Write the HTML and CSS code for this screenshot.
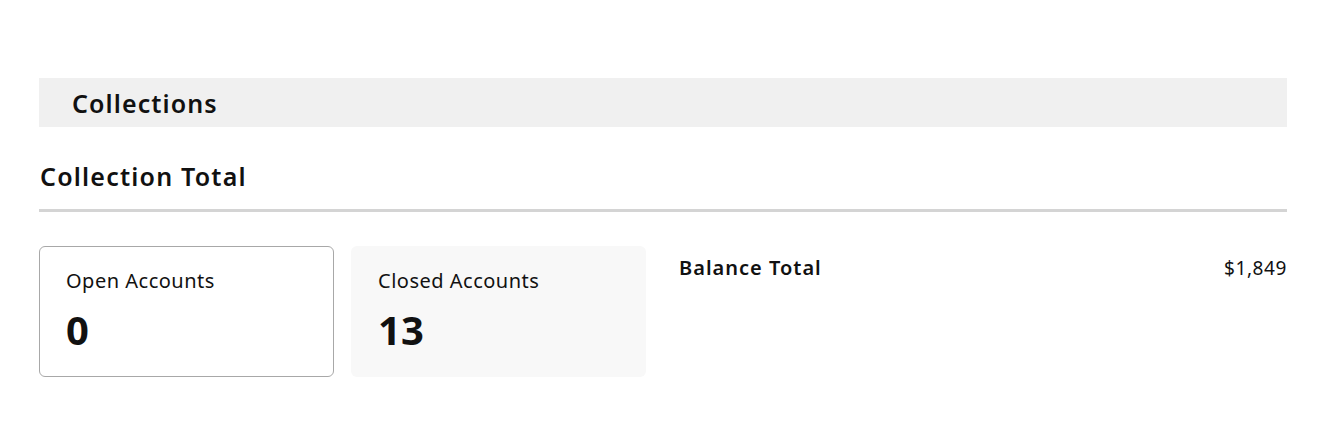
FILE: index.html
```html
<!DOCTYPE html>
<html lang="en">
<head>
    <meta charset="UTF-8">
    <meta name="viewport" content="width=device-width, initial-scale=1.0">
    <title>Collections</title>
    <link rel="stylesheet" href="styles.css">
</head>
<body>
    <div class="page">
        <div class="section-bar">
            <h2>Collections</h2>
        </div>
        <h3 class="total-title">Collection Total</h3>
        <div class="summary">
            <div class="card card-open">
                <p class="card-label">Open Accounts</p>
                <p class="card-value">0</p>
            </div>
            <div class="card card-closed">
                <p class="card-label">Closed Accounts</p>
                <p class="card-value">13</p>
            </div>
            <div class="balance">
                <span class="balance-label">Balance Total</span>
                <span class="balance-value">$1,849</span>
            </div>
        </div>
    </div>
</body>
</html>
```

FILE: styles.css
```css
body {
    margin: 0;
    font-family: "Noto Sans", "Liberation Sans", sans-serif;
    color: #111;
    background: #fff;
}
.page {
    padding: 78px 48px 0 39px;
}
.section-bar {
    background-color: #f0f0f0;
    height: 49px;
    display: flex;
    align-items: center;
    padding-left: 33px;
}
.section-bar h2 {
    margin: 0;
    font-size: 25px;
    font-weight: 600;
    letter-spacing: 1.1px;
}
.total-title {
    margin: 0;
    padding: 32px 0 16px 1px;
    font-size: 25px;
    font-weight: 600;
    letter-spacing: 1.2px;
    border-bottom: 3px solid #d4d4d4;
    line-height: 34px;
}
.summary {
    display: flex;
    gap: 17px;
    margin-top: 34px;
}
.card {
    width: 295px;
    height: 131px;
    box-sizing: border-box;
    border-radius: 6px;
    padding: 20px 26px;
}
.card-open {
    border: 1px solid #a8a8a8;
}
.card-closed {
    background-color: #f8f8f8;
    padding-left: 27px;
    padding-top: 21px;
}
.card-label {
    margin: 0;
    font-size: 20px;
    line-height: 28px;
    letter-spacing: 0.5px;
}
.card-value {
    margin: 9px 0 0;
    font-size: 40px;
    font-weight: 700;
    line-height: 52px;
}
.balance {
    flex: 1;
    display: flex;
    justify-content: space-between;
    padding: 8px 0 0 16px;
}
.balance-label {
    font-size: 20px;
    font-weight: 600;
    letter-spacing: 1px;
    line-height: 28px;
}
.balance-value {
    font-size: 19px;
    letter-spacing: 0.6px;
    line-height: 28px;
}
```
